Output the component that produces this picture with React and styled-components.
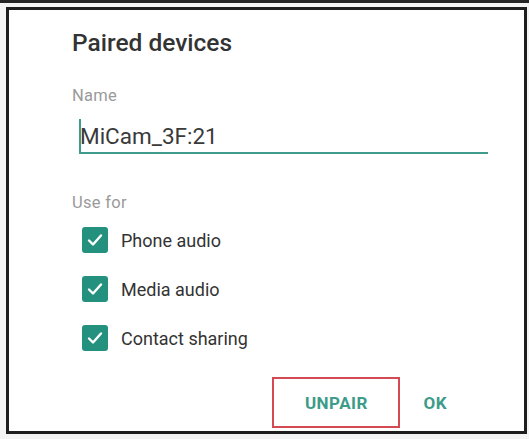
import React from "react";
import styled, { createGlobalStyle } from "styled-components";

const GlobalStyle = createGlobalStyle`
  html, body {
    margin: 0;
    padding: 0;
    background: #f4f4f4;
    font-family: Roboto, "Liberation Sans", sans-serif;
  }
`;

const Page = styled.div`
  width: 529px;
  height: 439px;
  display: flex;
  flex-direction: column;
  overflow: hidden;
`;

const TopStrip = styled.div`
  height: 3px;
  background: #262626;
  flex-shrink: 0;
`;

const Frame = styled.div`
  margin: 4px 2px 0 6px;
  height: 427px;
  box-sizing: border-box;
  border: 3px solid #1e1e1e;
  background: #fff;
  display: flex;
  flex-direction: column;
  padding: 19px 36px 0 63px;
`;

const Title = styled.h1`
  margin: 0;
  font-size: 24.5px;
  font-weight: 500;
  color: #333;
  line-height: 28px;
`;

const Label = styled.div`
  font-size: 16.5px;
  letter-spacing: 0.3px;
  color: #9a9a9a;
  line-height: 18px;
  margin-top: ${({ $top }) => $top}px;
`;

const Field = styled.div`
  margin: 14px 0 0 7px;
  height: 33px;
  border-bottom: 2px solid #3f9b8c;
  display: flex;
  align-items: center;
  position: relative;
`;

const FieldText = styled.span`
  font-size: 22.5px;
  color: #3a3a3a;
  padding-left: 1px;
`;

const Caret = styled.span`
  position: absolute;
  left: 0;
  top: 0;
  bottom: 0;
  width: 2px;
  background: #3f9b8c;
`;

const Options = styled.div`
  margin-top: 15px;
  margin-left: 10px;
  display: flex;
  flex-direction: column;
  gap: 23px;
`;

const Option = styled.label`
  display: flex;
  align-items: center;
  gap: 13px;
  font-size: 18px;
  color: #333;
`;

const Box = styled.span`
  width: 26px;
  height: 26px;
  flex-shrink: 0;
  border-radius: 3px;
  background: #24917e;
  display: flex;
  align-items: center;
  justify-content: center;
`;

const Actions = styled.div`
  margin-top: auto;
  margin-bottom: 3px;
  padding-right: 39px;
  display: flex;
  justify-content: flex-end;
  align-items: center;
  gap: 21px;
`;

const ActionButton = styled.button`
  background: none;
  font-family: inherit;
  font-size: 17px;
  font-weight: 700;
  color: #3d9b89;
  letter-spacing: 0.5px;
  height: 51px;
  padding: 0 ${({ $pad }) => $pad}px;
  box-sizing: border-box;
  border: 2px solid ${({ $outlined }) => ($outlined ? "#d34a52" : "transparent")};
  cursor: pointer;
`;

const Check = () => (
  <svg width="18" height="18" viewBox="0 0 18 18">
    <path d="M3 9.5l4 4 8-9" fill="none" stroke="#fff" strokeWidth="2.4" strokeLinecap="round" strokeLinejoin="round" />
  </svg>
);

const options = ["Phone audio", "Media audio", "Contact sharing"];

export default function App() {
  return (
    <Page>
      <GlobalStyle />
      <TopStrip />
      <Frame>
        <Title>Paired devices</Title>
        <Label $top={30}>Name</Label>
        <Field>
          <Caret />
          <FieldText>MiCam_3F:21</FieldText>
        </Field>
        <Label $top={40}>Use for</Label>
        <Options>
          {options.map((o) => (
            <Option key={o}>
              <Box>
                <Check />
              </Box>
              {o}
            </Option>
          ))}
        </Options>
        <Actions>
          <ActionButton $outlined $pad={30.5}>UNPAIR</ActionButton>
          <ActionButton $pad={0}>OK</ActionButton>
        </Actions>
      </Frame>
    </Page>
  );
}
